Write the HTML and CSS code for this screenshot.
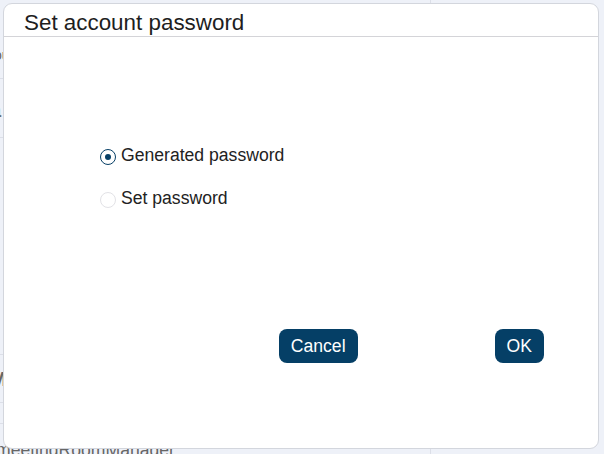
FILE: index.html
```html
<!DOCTYPE html>
<html>
<head>
<meta charset="utf-8">
<link rel="stylesheet" href="styles.css">
</head>
<body>
<div class="page">
  <div class="list">
    <div class="row r1"><span class="bgtext small">ou</span></div>
    <div class="row r2"><span class="bgtext big">a</span></div>
    <div class="row r3"></div>
    <div class="row r4"><span class="bgtext big">M</span></div>
    <div class="row r5"></div>
    <div class="row r6"><span class="bgtext name">meetingRoomManager</span></div>
  </div>
  <div class="side"></div>
</div>

<div class="dialog">
  <div class="header">Set account password</div>
  <div class="body">
    <label class="option">
      <input type="radio" name="pw" checked>
      <span class="label">Generated password</span>
    </label>
    <label class="option">
      <input type="radio" name="pw">
      <span class="label">Set password</span>
    </label>
  </div>
  <div class="footer">
    <button class="btn">Cancel</button>
    <button class="btn">OK</button>
  </div>
</div>
</body>
</html>
```

FILE: styles.css
```css
html, body {
  margin: 0;
  padding: 0;
}
body {
  width: 604px;
  height: 454px;
  overflow: hidden;
  background: #eef1f8;
  font-family: "Liberation Sans", Arial, sans-serif;
  position: relative;
}

.page {
  display: flex;
  height: 454px;
}
.list {
  width: 430px;
  border-right: 1px solid #dcdfe8;
  display: flex;
  flex-direction: column;
}
.row {
  border-bottom: 1px solid #dcdfe8;
  position: relative;
  box-sizing: border-box;
}
.r1 { height: 80px; }
.r2 { height: 60px; }
.r3 { height: 219px; }
.r4 { height: 49px; }
.r5 { height: 21px; }
.r6 { height: 30px; border-bottom: none; }
.bgtext {
  color: #666;
  display: block;
}
.small { font-size: 14px; margin-top: 47px; margin-left: -6px; }
.big { font-size: 20px; font-weight: bold; margin-top: 20px; margin-left: -10px; }
.r4 .big { margin-top: 13px; }
.name { font-size: 17.6px; margin-top: 16px; margin-left: -4px; line-height: 20px; }

.dialog {
  position: absolute;
  top: 3px;
  left: 3px;
  width: 596px;
  height: 446px;
  box-sizing: border-box;
  background: #fff;
  border: 1px solid #d3d6dd;
  border-radius: 9px;
  display: flex;
  flex-direction: column;
}
.header {
  padding: 6px 0 0 20px;
  height: 26px;
  line-height: 26px;
  font-size: 22.4px;
  color: #1e1e1e;
  border-bottom: 1px solid #d4d4d8;
}
.body {
  margin-top: 107px;
  padding-left: 96px;
  display: flex;
  flex-direction: column;
  gap: 21px;
}
.option {
  display: flex;
  align-items: center;
  height: 22px;
  cursor: pointer;
}
.option input {
  appearance: none;
  -webkit-appearance: none;
  margin: 4px 5px 0 0;
  width: 16px;
  height: 16px;
  box-sizing: border-box;
  border: 1px solid #e2e2e6;
  border-radius: 50%;
  background: #fff;
  display: grid;
  place-items: center;
}
.option input:checked {
  border: 1.5px solid #073f66;
}
.option input:checked::after {
  content: "";
  width: 6px;
  height: 6px;
  border-radius: 50%;
  background: #073f66;
}
.label {
  font-size: 17.6px;
  line-height: 22px;
  color: #222;
}
.footer {
  margin-top: 120px;
  display: flex;
  justify-content: flex-end;
  gap: 137px;
  padding-right: 54px;
}
.btn {
  font-family: "Liberation Sans", Arial, sans-serif;
  font-size: 17.6px;
  height: 34px;
  line-height: 34px;
  padding: 0 12px;
  border: none;
  border-radius: 8px;
  background: #053f66;
  color: #fff;
  cursor: pointer;
}
```
